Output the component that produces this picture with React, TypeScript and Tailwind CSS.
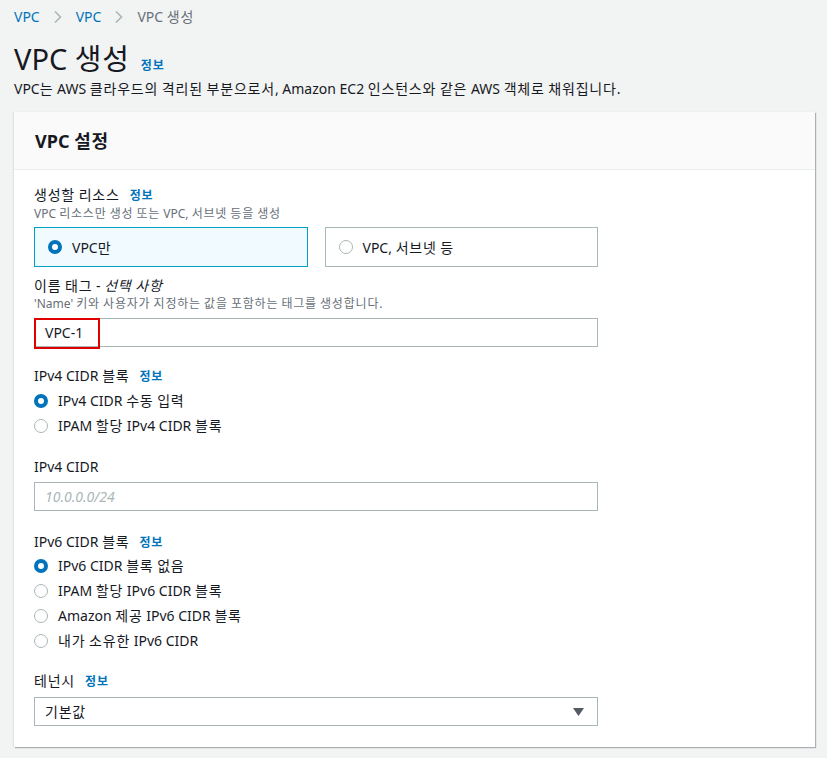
import React from "react";

const font = { fontFamily: '"Noto Sans", "Noto Sans CJK KR", sans-serif' };

function T({ children }: { children: string }) {
  const parts = children.split(/([\uAC00-\uD7A3]+)/);
  return (
    <>
      {parts.map((p, i) =>
        /[\uAC00-\uD7A3]/.test(p) ? (
          <span key={i} className="tracking-[0.8px]">
            {p}
          </span>
        ) : (
          <React.Fragment key={i}>{p}</React.Fragment>
        )
      )}
    </>
  );
}

function Info() {
  return (
    <span className="ml-[10px] text-[12px] font-bold text-[#0073bb]">
      <T>정보</T>
    </span>
  );
}

function Radio({ checked }: { checked?: boolean }) {
  return checked ? (
    <span className="inline-block h-[14px] w-[14px] shrink-0 rounded-full border-[4px] border-[#0073bb] bg-white" />
  ) : (
    <span className="inline-block h-[14px] w-[14px] shrink-0 rounded-full border-[1.5px] border-[#aab7b8] bg-white" />
  );
}

function RadioRow({ checked, label }: { checked?: boolean; label: string }) {
  return (
    <div className="flex h-[20px] items-center gap-[10px] text-[14px] leading-[20px] text-[#16191f]">
      <Radio checked={checked} />
      <span>
        <T>{label}</T>
      </span>
    </div>
  );
}

function Chevron() {
  return (
    <svg width="10" height="14" viewBox="0 0 10 14" className="mx-[13px]">
      <path d="M2 1.5 L7.5 7 L2 12.5" fill="none" stroke="#aab7b8" strokeWidth="1.6" />
    </svg>
  );
}

export default function App() {
  return (
    <div className="min-h-[758px] bg-[#f2f3f3] pb-[12px] text-[#16191f]" style={font}>
      <div className="px-[14px] pt-[7px]">
        <div className="flex h-[20px] items-center text-[14px] leading-[20px]">
          <span className="text-[#0073bb]">VPC</span>
          <Chevron />
          <span className="text-[#0073bb]">VPC</span>
          <Chevron />
          <span className="text-[#687078]">
            <T>VPC 생성</T>
          </span>
        </div>
        <div className="mt-[14px] flex items-baseline">
          <h1 className="text-[29px] font-normal leading-[36px]">
            <T>VPC 생성</T>
          </h1>
          <span className="ml-[11px] text-[12px] font-bold text-[#0073bb]">
            <T>정보</T>
          </span>
        </div>
        <p className="mt-[2px] text-[14px] leading-[20px]">
          <T>VPC는 AWS 클라우드의 격리된 부분으로서, Amazon EC2 인스턴스와 같은 AWS 객체로 채워집니다.</T>
        </p>
      </div>

      <div className="mx-[14px] mt-[13px] w-[801px] bg-white shadow-[1px_1px_1px_0_rgba(0,28,36,0.3),-1px_0_1px_0_rgba(0,28,36,0.08)]">
        <div className="flex h-[58px] items-center border-b border-[#eaeded] bg-[#fafafa] px-[21px]">
          <h2 className="text-[18px] font-bold leading-[24px]">
            <T>VPC 설정</T>
          </h2>
        </div>
        <div className="flex w-[604px] flex-col px-[20px] pb-[21px] pt-[15px]">
          <div className="text-[14px] leading-[20px]">
            <T>생성할 리소스</T>
            <Info />
          </div>
          <div className="text-[12px] leading-[16px] text-[#687078]">
            <T>VPC 리소스만 생성 또는 VPC, 서브넷 등을 생성</T>
          </div>
          <div className="mt-[5px] grid grid-cols-2 gap-[17px]">
            <div className="flex h-[40px] items-center gap-[10px] border border-[#00a1c9] bg-[#f1faff] px-[13px] text-[14px]">
              <Radio checked />
              <span>
                <T>VPC만</T>
              </span>
            </div>
            <div className="flex h-[40px] items-center gap-[10px] border border-[#aab7b8] bg-white px-[13px] text-[14px]">
              <Radio />
              <span>
                <T>VPC, 서브넷 등</T>
              </span>
            </div>
          </div>

          <div className="mt-[9px] text-[14px] leading-[20px]">
            <T>이름 태그 - </T>
            <i>
              <T>선택 사항</T>
            </i>
          </div>
          <div className="text-[12px] leading-[16px] text-[#687078]">
            <T>'Name' 키와 사용자가 지정하는 값을 포함하는 태그를 생성합니다.</T>
          </div>
          <div className="relative mt-[6px] flex h-[29px] items-center border border-[#aab7b8] px-[10px] text-[14px]">
            <span>VPC-1</span>
            <div className="absolute left-[-1px] top-[-1px] h-[31px] w-[66px] border-2 border-[#e00000]" />
          </div>

          <div className="mt-[19px] text-[14px] leading-[20px]">
            <T>IPv4 CIDR 블록</T>
            <Info />
          </div>
          <div className="mt-[4px] flex flex-col gap-[5px]">
            <RadioRow checked label="IPv4 CIDR 수동 입력" />
            <RadioRow label="IPAM 할당 IPv4 CIDR 블록" />
          </div>

          <div className="mt-[21px] text-[14px] leading-[20px]">IPv4 CIDR</div>
          <div className="mt-[5px] flex h-[29px] items-center border border-[#aab7b8] px-[10px] text-[14px] italic text-[#aab7b8]">
            10.0.0.0/24
          </div>

          <div className="mt-[21px] text-[14px] leading-[20px]">
            <T>IPv6 CIDR 블록</T>
            <Info />
          </div>
          <div className="mt-[3px] flex flex-col gap-[5px]">
            <RadioRow checked label="IPv6 CIDR 블록 없음" />
            <RadioRow label="IPAM 할당 IPv6 CIDR 블록" />
            <RadioRow label="Amazon 제공 IPv6 CIDR 블록" />
            <RadioRow label="내가 소유한 IPv6 CIDR" />
          </div>

          <div className="mt-[20px] text-[14px] leading-[20px]">
            <T>테넌시</T>
            <Info />
          </div>
          <div className="mt-[5px] flex h-[29px] items-center justify-between border border-[#aab7b8] pl-[10px] pr-[13px] text-[14px]">
            <span>
              <T>기본값</T>
            </span>
            <svg width="11" height="8" viewBox="0 0 11 8">
              <path d="M0 0 H11 L5.5 8 Z" fill="#545b64" />
            </svg>
          </div>
        </div>
      </div>
    </div>
  );
}
